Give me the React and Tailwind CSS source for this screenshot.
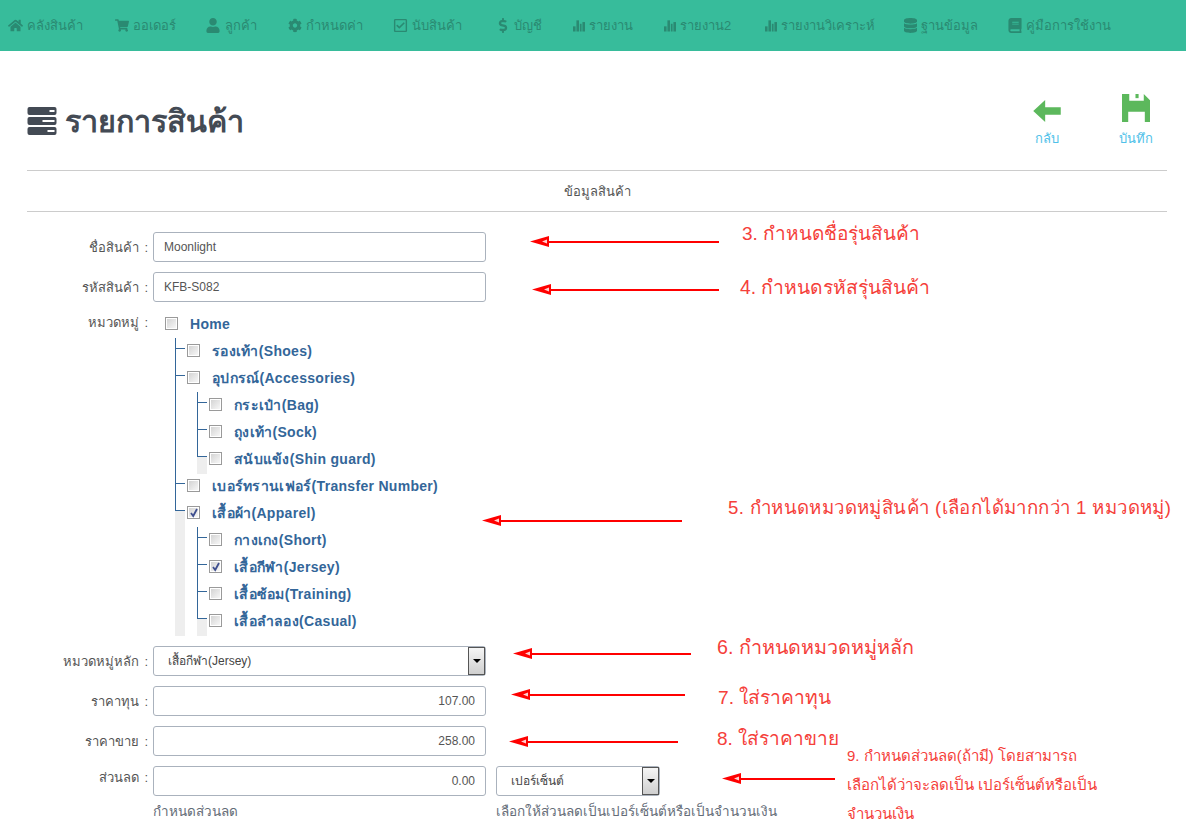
import { FaHome, FaShoppingCart, FaUser, FaCog, FaRegCheckSquare, FaDollarSign, FaDatabase, FaBook } from 'react-icons/fa'

// Ícone de barras (glyphicon-stats)
function StatsIcon({ className }) {
  return (
    <svg className={className} viewBox="0 0 14 14" fill="currentColor" aria-hidden="true">
      <rect x="0" y="8" width="3" height="6" />
      <rect x="4" y="1" width="3" height="13" />
      <rect x="8" y="5" width="2" height="9" />
      <rect x="11" y="3" width="3" height="11" />
    </svg>
  )
}

function ServerIcon({ className }) {
  const bars = [
    { y: 0, x: 22, w: 5 },
    { y: 10, x: 15, w: 12 },
    { y: 20, x: 20, w: 7 },
  ]
  return (
    <svg className={className} viewBox="0 0 29 28" aria-hidden="true">
      {bars.map((b) => (
        <g key={b.y}>
          <rect x="0" y={b.y} width="29" height="8" rx="2" fill="#434a54" />
          <rect x={b.x} y={b.y + 3} width={b.w} height="2" fill="#fff" />
        </g>
      ))}
    </svg>
  )
}

function BackIcon({ className }) {
  return (
    <svg className={className} viewBox="0 0 30 24" fill="#5cb85c" aria-hidden="true">
      <path d="M0 12 L13 0 L13 8 L30 8 L30 16 L13 16 L13 24 Z" />
    </svg>
  )
}

function SaveIcon({ className }) {
  return (
    <svg className={className} viewBox="0 0 27 27" fill="#5cb85c" aria-hidden="true">
      <path fillRule="evenodd" d="M0 0 H21 L27 6 V27 H22 V17 H6 V27 H0 Z M7 0 V6.5 H21 V0 Z" />
      <rect x="13" y="0" width="3" height="4" />
    </svg>
  )
}

function Checkbox({ checked }) {
  return (
    <span className="relative block w-[13px] h-[13px] shrink-0 border border-[#9a9a9a] bg-white p-px">
      <span className="block w-full h-full bg-gradient-to-br from-[#d4d4d4] to-[#f7f7f7]" />
      {checked && (
        <svg className="absolute left-[1px] top-[1px] w-[10px] h-[10px]" viewBox="0 0 10 10" fill="none" stroke="#3f4f8f" strokeWidth="1.8">
          <path d="M2 5 L4.2 8 L8 1" />
        </svg>
      )}
    </span>
  )
}

function TreeRow({ label, checked }) {
  return (
    <div className="flex items-center h-[27px]">
      <span className="-mt-[3px]"><Checkbox checked={checked} /></span>
      <span className="ml-[12px] text-[14px] font-bold text-[#336699] tracking-[0.3px] whitespace-nowrap">{label}</span>
    </div>
  )
}

// Item da árvore com as linhas de ligação
function TreeItem({ label, checked, last, children }) {
  return (
    <li className="relative pl-[12px]">
      {last ? (
        <>
          <span className="absolute left-0 top-0 w-px h-[11px] bg-[#336699]" />
          <span className="absolute left-0 top-[11px] -bottom-px w-[10px] bg-[#eeeeee]" />
        </>
      ) : (
        <span className="absolute left-0 top-0 bottom-0 w-px bg-[#336699]" />
      )}
      <span className="absolute left-0 top-[10px] w-[10px] h-px bg-[#336699]" />
      <TreeRow label={label} checked={checked} />
      {children && <ul className="ml-[10px]">{children}</ul>}
    </li>
  )
}

function FieldLabel({ children, className = 'pt-[6px]' }) {
  return (
    <label className={`w-[153px] shrink-0 pr-[5px] text-right text-[13px] text-[#555] whitespace-nowrap ${className}`}>
      {children}<span className="ml-[5px]">:</span>
    </label>
  )
}

function Field({ label, value, right, labelClass }) {
  return (
    <div className="flex h-[30px]">
      <FieldLabel className={labelClass}>{label}</FieldLabel>
      <input
        readOnly
        value={value}
        className={`w-[333px] h-[30px] border border-[#aab2bd] rounded-[3px] px-[10px] text-[12px] text-[#555] bg-white ${right ? 'text-right' : ''}`}
      />
    </div>
  )
}

function SelectBox({ value, className }) {
  return (
    <div className={`relative h-[30px] border border-[#aab2bd] rounded-[3px] bg-white flex items-center pl-[14px] text-[12px] text-[#444] ${className}`}>
      {value}
      <span className="absolute right-0 top-0 w-[17px] h-[28px] border border-[#555] bg-gradient-to-b from-[#f5f5f5] to-[#cfcfcf] flex items-center justify-center">
        <span className="w-0 h-0 border-x-[4px] border-x-transparent border-t-[4px] border-t-black" />
      </span>
    </div>
  )
}

function Arrow({ className }) {
  return (
    <div className={`absolute h-[11px] flex items-center ${className}`}>
      <svg className="w-[19px] h-[11px] shrink-0" viewBox="0 0 19 11">
        <path d="M0 5.5 L19 0 L19 11 Z" fill="#ff0000" />
        <path d="M12 5.5 L17 3.5 L17 7.5 Z" fill="#ffd0d0" />
      </svg>
      <span className="flex-1 h-[2px] bg-[#ff0000]" />
    </div>
  )
}

function Note({ className, children }) {
  return <div className={`absolute text-[#f5403a] whitespace-nowrap ${className}`}>{children}</div>
}

const navItems = [
  { icon: FaHome, label: 'คลังสินค้า', w: 'w-[15px]', ml: '' },
  { icon: FaShoppingCart, label: 'ออเดอร์', w: 'w-[14px]', ml: 'ml-[2px]' },
  { icon: FaUser, label: 'ลูกค้า', w: 'w-[16px]', ml: '-ml-[1px]' },
  { icon: FaCog, label: 'กำหนดค่า', w: 'w-[14px]', ml: 'ml-[1px]' },
  { icon: FaRegCheckSquare, label: 'นับสินค้า', w: 'w-[15px]', ml: '' },
  { icon: FaDollarSign, label: 'บัญชี', w: 'w-[14px]', ml: 'ml-[4px]' },
  { icon: StatsIcon, label: 'รายงาน', w: 'w-[12px]', ml: 'ml-[1px]' },
  { icon: StatsIcon, label: 'รายงาน2', w: 'w-[12px]', ml: 'ml-[1px]' },
  { icon: StatsIcon, label: 'รายงานวิเคราะห์', w: 'w-[12px]', ml: 'ml-[4px]' },
  { icon: FaDatabase, label: 'ฐานข้อมูล', w: 'w-[13px]', ml: '-ml-[1px]' },
  { icon: FaBook, label: 'คู่มือการใช้งาน', w: 'w-[14px]', ml: '' },
]

export default function App() {
  return (
    <div className="relative h-[829px] overflow-hidden bg-white font-['Liberation_Sans','Noto_Sans',sans-serif]">
      <nav className="h-[51px] bg-[#37bc9b] flex items-center pl-[8px] gap-[30px] text-[13px] text-[#2a8a72] whitespace-nowrap">
        {navItems.map((item) => (
          <a key={item.label} className={`flex items-center gap-[4px] ${item.ml}`}>
            <item.icon className={`${item.w} h-[15px]`} />
            <span>{item.label}</span>
          </a>
        ))}
      </nav>

      <main className="pl-[27px] pr-[19px]">
        <header className="h-[120px] border-b border-[#ccc] flex items-start justify-between">
          <div className="flex items-center gap-[8px] mt-[51px]">
            <ServerIcon className="w-[30px] h-[28px]" />
            <h1 className="text-[30.5px] font-bold text-[#434a54] leading-[38px]">รายการสินค้า</h1>
          </div>
          <div className="flex text-[13px] text-[#4fc1e9] mr-[13px] mt-[43px]">
            <a className="flex flex-col items-center w-[36px] mr-[53px]">
              <BackIcon className="w-[30px] h-[22px] mt-[6px]" />
              <span className="mt-[7px]">กลับ</span>
            </a>
            <a className="flex flex-col items-center w-[36px]">
              <SaveIcon className="w-[28px] h-[28px]" />
              <span className="mt-[7px]">บันทึก</span>
            </a>
          </div>
        </header>

        <h2 className="h-[41px] pt-[1px] border-b border-[#ccc] flex items-center justify-center text-[13px] text-[#555] font-normal">ข้อมูลสินค้า</h2>
      </main>

      <form className="pt-[20px]">
        <div className="flex flex-col gap-[10px]">
          <Field label="ชื่อสินค้า" value="Moonlight" />
          <Field label="รหัสสินค้า" value="KFB-S082" />
        </div>

        {/* Árvore de categorias */}
        <div className="flex mt-[9px] h-[325px]">
          <FieldLabel className="pt-[2px]">หมวดหมู่</FieldLabel>
          <div className="ml-[12px]">
            <TreeRow label="Home" />
            <ul className="ml-[10px]">
              <TreeItem label="รองเท้า(Shoes)" />
              <TreeItem label="อุปกรณ์(Accessories)">
                <TreeItem label="กระเป๋า(Bag)" />
                <TreeItem label="ถุงเท้า(Sock)" />
                <TreeItem label="สนับแข้ง(Shin guard)" last />
              </TreeItem>
              <TreeItem label="เบอร์ทรานเฟอร์(Transfer Number)" />
              <TreeItem label="เสื้อผ้า(Apparel)" checked last>
                <TreeItem label="กางเกง(Short)" />
                <TreeItem label="เสื้อกีฬา(Jersey)" checked />
                <TreeItem label="เสื้อซ้อม(Training)" />
                <TreeItem label="เสื้อลำลอง(Casual)" last />
              </TreeItem>
            </ul>
          </div>
        </div>

        <div className="flex flex-col gap-[10px] mt-[10px]">
          <div className="flex h-[30px]">
            <FieldLabel>หมวดหมู่หลัก</FieldLabel>
            <SelectBox value="เสื้อกีฬา(Jersey)" className="w-[333px]" />
          </div>
          <Field label="ราคาทุน" value="107.00" right />
          <Field label="ราคาขาย" value="258.00" right />
          <div className="flex">
            <Field label="ส่วนลด" value="0.00" right labelClass="pt-[2px]" />
            <SelectBox value="เปอร์เซ็นต์" className="w-[164px] ml-[10px]" />
          </div>
        </div>
        <div className="flex mt-[6px] text-[13.5px] text-[#656d78]">
          <span className="ml-[153px] w-[343px]">กำหนดส่วนลด</span>
          <span>เลือกให้ส่วนลดเป็นเปอร์เซ็นต์หรือเป็นจำนวนเงิน</span>
        </div>
      </form>

      {/* Anotações sobre a captura */}
      <Arrow className="left-[530px] top-[236px] w-[189px]" />
      <Arrow className="left-[532px] top-[284px] w-[187px]" />
      <Arrow className="left-[482px] top-[515px] w-[200px]" />
      <Arrow className="left-[513px] top-[648px] w-[178px]" />
      <Arrow className="left-[511px] top-[689px] w-[174px]" />
      <Arrow className="left-[509px] top-[736px] w-[169px]" />
      <Arrow className="left-[722px] top-[773px] w-[113px]" />

      <Note className="left-[742px] top-[220px] text-[19px]">3. กำหนดชื่อรุ่นสินค้า</Note>
      <Note className="left-[740px] top-[274px] text-[19.3px]">4. กำหนดรหัสรุ่นสินค้า</Note>
      <Note className="left-[728px] top-[494px] text-[18.6px] tracking-[0.4px]">5. กำหนดหมวดหมู่สินค้า (เลือกได้มากกว่า 1 หมวดหมู่)</Note>
      <Note className="left-[717px] top-[633px] text-[19.7px]">6. กำหนดหมวดหมู่หลัก</Note>
      <Note className="left-[718px] top-[684px] text-[19.2px]">7. ใส่ราคาทุน</Note>
      <Note className="left-[717px] top-[725px] text-[19px]">8. ใส่ราคาขาย</Note>
      <Note className="left-[847px] top-[741px] text-[15px] leading-[29px]">
        9. กำหนดส่วนลด(ถ้ามี) โดยสามารถ<br />
        เลือกได้ว่าจะลดเป็น เปอร์เซ็นต์หรือเป็น<br />
        จำนวนเงิน
      </Note>
    </div>
  )
}
